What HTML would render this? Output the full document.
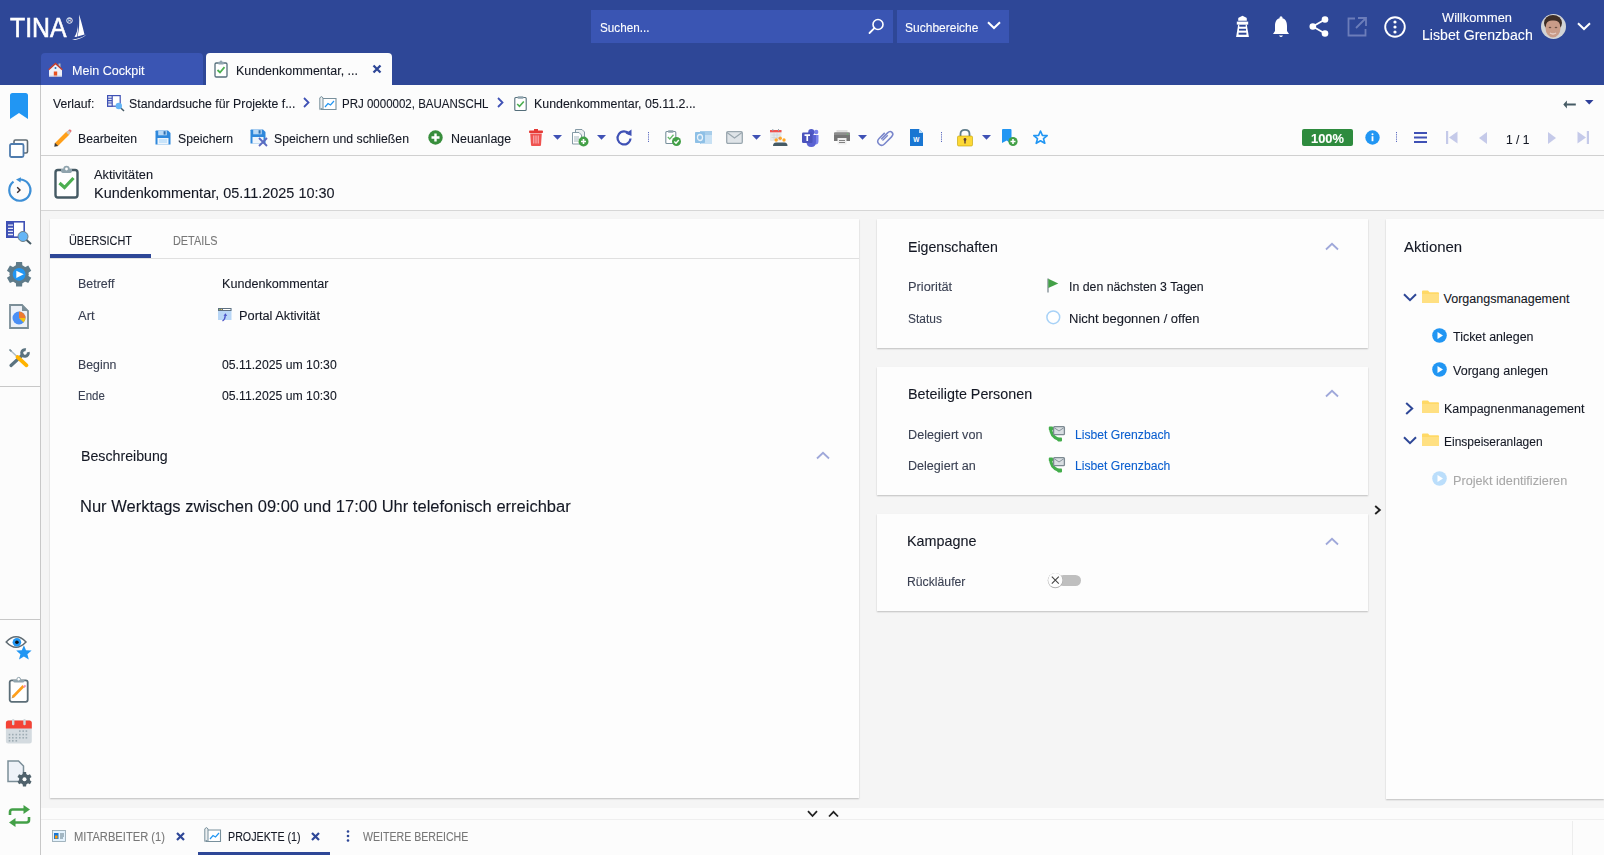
<!DOCTYPE html>
<html><head><meta charset="utf-8">
<style>
*{margin:0;padding:0;box-sizing:border-box}
html,body{width:1604px;height:855px;overflow:hidden;background:#fcfcfc;font-family:"Liberation Sans",sans-serif}
.t{position:absolute;white-space:nowrap;line-height:1;-webkit-text-stroke:0.1px currentColor}
.r{position:absolute}
svg{position:absolute;overflow:visible}
</style></head><body>

<div class="r" style="left:0px;top:0px;width:1604px;height:85px;background:#2e4797;"></div>
<div class="t" style="left:9.50px;top:13.62px;font-size:27.5px;letter-spacing:0.000px;color:#fff;transform:scaleX(0.9018);transform-origin:0 0;-webkit-text-stroke:0.6px #fff;">TINA</div>
<svg style="left:66px;top:17px" width="7" height="7" viewBox="0 0 7 7"><circle cx="3.5" cy="3.5" r="2.8" fill="none" stroke="#fff" stroke-width="0.9"/><text x="3.5" y="5.2" font-size="4.5" fill="#fff" text-anchor="middle" font-family="Liberation Sans">R</text></svg>
<svg style="left:72px;top:14px" width="15" height="26" viewBox="0 0 15 26"><path d="M7 0.5 Q9 6 12.5 20.5 L5.5 22.5 Q8 12 7 0.5 Z" fill="#fff"/><path d="M6 10 Q6 17 2.5 23 L5 22.8 Q6.5 16 6 10 Z" fill="#fff"/><path d="M0 25.5 Q8 25 14.5 20.5 Q11 24 3 26 Z" fill="#fff"/></svg>
<div class="r" style="left:591px;top:10px;width:302px;height:33px;background:#3a55b3;"></div>
<div class="t" style="left:600.40px;top:21.92px;font-size:12.5px;letter-spacing:0.000px;color:#fff;transform:scaleX(0.9356);transform-origin:0 0;">Suchen...</div>
<svg style="left:868px;top:18px" width="17" height="17" viewBox="0 0 17 17"><circle cx="10" cy="6.5" r="5" fill="none" stroke="#fff" stroke-width="1.6"/><path d="M6.4 10.2 L1.5 15" stroke="#fff" stroke-width="1.8" stroke-linecap="round"/></svg>
<div class="r" style="left:897px;top:10px;width:112px;height:33px;background:#3a55b3;"></div>
<div class="t" style="left:905.00px;top:21.92px;font-size:12.5px;letter-spacing:0.000px;color:#fff;transform:scaleX(0.9614);transform-origin:0 0;">Suchbereiche</div>
<svg style="left:987px;top:21px" width="14" height="9" viewBox="0 0 14 9"><path d="M1 1.2 L7 7 L13 1.2" fill="none" stroke="#fff" stroke-width="2"/></svg>
<svg style="left:1235px;top:15px" width="15" height="23" viewBox="0 0 15 23"><path d="M3.2 5.8 V3.6 Q3.2 2.6 4.5 2.2 L7.5 0.8 L10.5 2.2 Q11.8 2.6 11.8 3.6 V5.8 Z" fill="#fff"/><path d="M1.8 6.6 H13.2 V9.6 H1.8 Z" fill="#fff"/><path d="M3.2 9.4 H11.8 L13.9 22 H1.1 Z" fill="#fff"/><g fill="#2e4797"><rect x="4.3" y="9.9" width="6.4" height="1.8"/><rect x="4" y="13.8" width="7" height="1.8"/><rect x="3.6" y="17.7" width="7.8" height="2"/></g></svg>
<svg style="left:1272px;top:16px" width="18" height="23" viewBox="0 0 18 23"><path d="M9 2 C4.5 2 3 6 3 10 L3 15 L1 18 L17 18 L15 15 L15 10 C15 6 13.5 2 9 2 Z" fill="#fff"/><circle cx="9" cy="1.8" r="1.5" fill="#fff"/><path d="M7 19.5 Q9 22.5 11 19.5 Z" fill="#fff"/></svg>
<svg style="left:1309px;top:16px" width="20" height="21" viewBox="0 0 20 21"><circle cx="16" cy="3.5" r="3.3" fill="#fff"/><circle cx="3.8" cy="10.5" r="3.3" fill="#fff"/><circle cx="16" cy="17.5" r="3.3" fill="#fff"/><path d="M16 3.5 L3.8 10.5 L16 17.5" fill="none" stroke="#fff" stroke-width="1.8"/></svg>
<svg style="left:1347px;top:17px" width="20" height="20" viewBox="0 0 20 20"><path d="M8 1.5 L1.5 1.5 L1.5 18.5 L18.5 18.5 L18.5 12" fill="none" stroke="#6c7dba" stroke-width="1.8"/><path d="M11 1 L19 1 L19 9 M19 1 L9 11" fill="none" stroke="#6c7dba" stroke-width="1.8"/></svg>
<svg style="left:1384px;top:16px" width="22" height="22" viewBox="0 0 22 22"><circle cx="11" cy="11" r="9.8" fill="none" stroke="#fff" stroke-width="1.9"/><circle cx="11" cy="6" r="1.6" fill="#fff"/><circle cx="11" cy="11" r="1.6" fill="#fff"/><circle cx="11" cy="16" r="1.6" fill="#fff"/></svg>
<div class="t" style="left:1442.00px;top:11.62px;font-size:12.5px;letter-spacing:0.000px;color:#fff;transform:scaleX(1.0287);transform-origin:0 0;">Willkommen</div>
<div class="t" style="left:1421.70px;top:28.40px;font-size:14.3px;letter-spacing:0.000px;color:#fff;transform:scaleX(0.9884);transform-origin:0 0;">Lisbet Grenzbach</div>
<svg style="left:1541px;top:14px" width="25" height="25" viewBox="0 0 25 25"><defs><clipPath id="av"><circle cx="12.5" cy="12.5" r="12.5"/></clipPath></defs><g clip-path="url(#av)"><rect width="25" height="25" fill="#d2d4d6"/><ellipse cx="12" cy="9" rx="9" ry="8" fill="#3e2e26"/><ellipse cx="12" cy="14" rx="7.5" ry="9.5" fill="#c99c88"/><path d="M4.5 10 Q6 3 12 3.5 Q18 3 19.5 10 Q17 6 12 6.5 Q7 6 4.5 10 Z" fill="#3e2e26"/><ellipse cx="9" cy="13.5" rx="1.3" ry="0.8" fill="#6b5044"/><ellipse cx="15" cy="13.5" rx="1.3" ry="0.8" fill="#6b5044"/><path d="M9 19 Q12 21 15 19" stroke="#e8d0c8" stroke-width="1.3" fill="none"/></g></svg>
<svg style="left:1577px;top:22px" width="14" height="9" viewBox="0 0 14 9"><path d="M1 1.2 L7 7 L13 1.2" fill="none" stroke="#fff" stroke-width="2"/></svg>
<div class="r" style="left:41px;top:53px;width:162px;height:32px;background:#3a55b3;border-radius:4px 4px 0 0"></div>
<svg style="left:48px;top:62px" width="15" height="15" viewBox="0 0 15 15"><rect x="10.5" y="1.5" width="2" height="4" fill="#b0bec5"/><path d="M7.5 1 L1 7.2 V14.5 H14 V7.2 Z" fill="#eef0f7"/><path d="M7.5 0.6 L0.2 7.3 L1.1 8.2 L7.5 2.4 L13.9 8.2 L14.8 7.3 Z" fill="#c0392b"/><circle cx="7.5" cy="5.9" r="1" fill="#1e6fb8"/><rect x="5.8" y="9.5" width="3.4" height="5" fill="#e8501f"/><rect x="1" y="13.5" width="13" height="1" fill="#cfd3e6"/></svg>
<div class="t" style="left:71.60px;top:64.82px;font-size:12.5px;letter-spacing:0.000px;color:#fff;transform:scaleX(1.0035);transform-origin:0 0;">Mein Cockpit</div>
<div class="r" style="left:206px;top:53px;width:186px;height:32px;background:#fcfcfc;border-radius:4px 4px 0 0"></div>
<svg style="left:214px;top:60px" width="14" height="18" viewBox="0 0 14 18"><rect x="1" y="3" width="12" height="14" rx="1.3" fill="#fff" stroke="#546e7a" stroke-width="1.3"/><rect x="4" y="1.8" width="6" height="2.6" rx="0.8" fill="#90a4ae"/><circle cx="7" cy="1.6" r="1.2" fill="#90a4ae"/><path d="M3.5 10 L6 12.5 L10.5 7.2" fill="none" stroke="#4caf50" stroke-width="1.8"/></svg>
<div class="t" style="left:236.40px;top:64.82px;font-size:12.5px;letter-spacing:0.000px;color:#141824;transform:scaleX(0.9975);transform-origin:0 0;">Kundenkommentar, ...</div>
<svg style="left:372px;top:64px" width="10" height="10" viewBox="0 0 10 10"><path d="M1.5 1.5 L8.5 8.5 M8.5 1.5 L1.5 8.5" stroke="#2e4797" stroke-width="2.3"/></svg>
<div class="r" style="left:40px;top:85px;width:1px;height:770px;background:#c8c8c8;"></div>
<div class="r" style="left:0px;top:386px;width:40px;height:1px;background:#c8c8c8;"></div>
<div class="r" style="left:0px;top:619px;width:40px;height:1px;background:#c8c8c8;"></div>
<svg style="left:10px;top:93px" width="18" height="26" viewBox="0 0 18 26"><path d="M2.5 0 L15.5 0 Q18 0 18 2.5 L18 26 L9 20 L0 26 L0 2.5 Q0 0 2.5 0 Z" fill="#2196f3"/></svg>
<svg style="left:9px;top:139px" width="20" height="19" viewBox="0 0 20 19"><rect x="5" y="1" width="13.5" height="13" rx="1.5" fill="none" stroke="#5f6b73" stroke-width="1.6"/><rect x="1" y="5" width="13.5" height="13" rx="1.5" fill="#fff" stroke="#4f7cae" stroke-width="1.8"/></svg>
<svg style="left:7px;top:178px" width="24" height="24" viewBox="0 0 24 24"><path d="M6.5 3.6 A10.6 10.6 0 1 0 12.5 1.5" fill="none" stroke="#3d8fd6" stroke-width="2.2"/><path d="M9 1.6 L14 -0.8 L13.6 4.6 Z" fill="#3d8fd6"/><path d="M10.2 9.2 L13 12 L10.2 14.8" fill="none" stroke="#3a2a2a" stroke-width="1.4"/></svg>
<svg style="left:6px;top:221px" width="26" height="24" viewBox="0 0 26 24"><rect x="0.8" y="0.8" width="17.4" height="15.4" fill="#fff" stroke="#3f51b5" stroke-width="1.6"/><rect x="0.8" y="0.8" width="7.2" height="15.4" fill="#3f51b5"/><path d="M2 4.2 H7 M2 7.3 H7 M2 10.4 H7 M2 13.5 H7" stroke="#e8eaf6" stroke-width="1.3"/><path d="M20 18.5 L25 23" stroke="#455a64" stroke-width="2"/><circle cx="17" cy="15.5" r="5" fill="#64b5f6" stroke="#6d7f88" stroke-width="1"/></svg>
<svg style="left:6px;top:261px" width="26" height="26" viewBox="0 0 26 26"><g transform="translate(13.1 13.3)" fill="#5f7b89"><circle r="9.6"/><path d="M-3 -12.3 H3 L3.3 -8 H-3.3 Z"/><path d="M-3 -12.3 H3 L3.3 -8 H-3.3 Z" transform="rotate(60)"/><path d="M-3 -12.3 H3 L3.3 -8 H-3.3 Z" transform="rotate(120)"/><path d="M-3 -12.3 H3 L3.3 -8 H-3.3 Z" transform="rotate(180)"/><path d="M-3 -12.3 H3 L3.3 -8 H-3.3 Z" transform="rotate(240)"/><path d="M-3 -12.3 H3 L3.3 -8 H-3.3 Z" transform="rotate(300)"/><circle r="6.4" fill="#2196f3"/><path d="M-2.8 -3.6 L4.6 0 L-2.8 3.6 Z" fill="#fff"/></g></svg>
<svg style="left:9px;top:304px" width="20" height="25" viewBox="0 0 20 25"><path d="M1 1 H13 L19 7 V24 H1 Z" fill="#edf1f7" stroke="#7b8e98" stroke-width="1.8"/><path d="M13 0.2 L19.8 7 H13 Z" fill="#7b8e98"/><circle cx="10" cy="14" r="6.5" fill="#4a8ff5"/><path d="M10 14 V7.5 A6.5 6.5 0 0 1 16.5 14 Z" fill="#ee7b30"/><path d="M10 14 H16.5 A6.5 6.5 0 0 1 14.6 18.6 Z" fill="#f4c20d"/></svg>
<svg style="left:8px;top:348px" width="22" height="20" viewBox="0 0 22 20"><path d="M2 2 L9.5 9" stroke="#b0bec5" stroke-width="1.6" stroke-linecap="round"/><path d="M1.5 1.5 L3.5 3.3" stroke="#78909c" stroke-width="1.6"/><path d="M3 17.5 L14.5 7" stroke="#5b7380" stroke-width="3.2" stroke-linecap="round"/><path d="M20.2 4.2 A3.3 3.3 0 1 1 17.8 1.8" fill="none" stroke="#5b7380" stroke-width="3"/><path d="M9.5 9 L18.5 17.3" stroke="#ffb300" stroke-width="3.8" stroke-linecap="round"/></svg>
<svg style="left:5px;top:635px" width="28" height="25" viewBox="0 0 28 25"><path d="M1.2 7 Q11 -3.5 21 7 Q11 17.5 1.2 7 Z" fill="#fff" stroke="#5f6b73" stroke-width="1.5"/><circle cx="11.9" cy="7.2" r="4.3" fill="#2196f3"/><circle cx="11.9" cy="7.2" r="1.8" fill="#111"/><path d="M18.9 10.3 L21 15.2 L26.6 15.6 L22.4 19.2 L23.8 24.5 L18.9 21.6 L14 24.5 L15.4 19.2 L11.2 15.6 L16.8 15.2 Z" fill="#2196f3"/></svg>
<svg style="left:8px;top:677px" width="21" height="26" viewBox="0 0 21 26"><rect x="1.7" y="3.3" width="18" height="21.5" rx="2" fill="#fff" stroke="#5b6d77" stroke-width="1.8"/><path d="M5 3 H16.5 Q16.5 5.5 15 5.5 H6.5 Q5 5.5 5 3 Z" fill="#90a4ae"/><circle cx="10.7" cy="2.2" r="1.8" fill="#fff" stroke="#90a4ae" stroke-width="1"/><path d="M4.8 20 L15.5 9" stroke="#ff9f1a" stroke-width="2.6"/><path d="M15 9.5 L16.8 7.7 L18.2 9 L16.4 10.9 Z" fill="#f48fb1"/><path d="M3.6 21.5 L4.2 19 L5.8 20.5 Z" fill="#c99a5b"/></svg>
<svg style="left:5px;top:719px" width="27" height="25" viewBox="0 0 27 25"><rect x="0.9" y="1.4" width="25.9" height="23.2" rx="2.5" fill="#d4dbe0"/><path d="M0.9 4 Q0.9 1.4 3.4 1.4 H24.3 Q26.8 1.4 26.8 4 V9.6 H0.9 Z" fill="#f44336"/><rect x="7" y="0" width="2.4" height="6.3" rx="1.1" fill="#cfd8dc"/><rect x="18.3" y="0" width="2.4" height="6.3" rx="1.1" fill="#cfd8dc"/><g fill="#9eacb4"><rect x="14" y="11.3" width="1.6" height="1.6"/><rect x="17.4" y="11.3" width="1.6" height="1.6"/><rect x="20.6" y="11.3" width="1.6" height="1.6"/><rect x="3.7" y="14.8" width="1.6" height="1.6"/><rect x="7" y="14.8" width="1.6" height="1.6"/><rect x="10.5" y="14.8" width="1.6" height="1.6"/><rect x="14" y="14.8" width="1.6" height="1.6"/><rect x="17.4" y="14.8" width="1.6" height="1.6"/><rect x="20.6" y="14.8" width="1.6" height="1.6"/><rect x="3.7" y="18" width="1.6" height="1.6"/><rect x="7" y="18" width="1.6" height="1.6"/><rect x="10.5" y="18" width="1.6" height="1.6"/><rect x="14" y="18" width="1.6" height="1.6"/><rect x="17.4" y="18" width="1.6" height="1.6"/><rect x="20.6" y="18" width="1.6" height="1.6"/><rect x="3.7" y="21" width="1.6" height="1.6"/><rect x="7" y="21" width="1.6" height="1.6"/><rect x="10.5" y="21" width="1.6" height="1.6"/></g></svg>
<svg style="left:7px;top:760px" width="25" height="27" viewBox="0 0 25 27"><path d="M1 1 H11.5 L16.5 6 V21.5 H1 Z" fill="#eef2f8" stroke="#7b8e98" stroke-width="1.5"/><g transform="translate(17.5 19.2)" fill="#50626c"><circle r="5.4"/><path d="M-1.6 -7.2 H1.6 L1.9 -4 H-1.9 Z"/><path d="M-1.6 -7.2 H1.6 L1.9 -4 H-1.9 Z" transform="rotate(60)"/><path d="M-1.6 -7.2 H1.6 L1.9 -4 H-1.9 Z" transform="rotate(120)"/><path d="M-1.6 -7.2 H1.6 L1.9 -4 H-1.9 Z" transform="rotate(180)"/><path d="M-1.6 -7.2 H1.6 L1.9 -4 H-1.9 Z" transform="rotate(240)"/><path d="M-1.6 -7.2 H1.6 L1.9 -4 H-1.9 Z" transform="rotate(300)"/><circle r="2" fill="#fff"/></g></svg>
<svg style="left:8px;top:805px" width="23" height="22" viewBox="0 0 23 22"><path d="M2 10 V7 Q2 4.5 4.5 4.5 H17" fill="none" stroke="#43a047" stroke-width="2.6"/><path d="M15.5 0 L22 4.5 L15.5 9 Z" fill="#43a047"/><path d="M21 12 V15 Q21 17.5 18.5 17.5 H6" fill="none" stroke="#43a047" stroke-width="2.6"/><path d="M7.5 13 L1 17.5 L7.5 22 Z" fill="#43a047"/></svg>
<div class="t" style="left:52.70px;top:97.92px;font-size:12.5px;letter-spacing:0.000px;color:#141824;transform:scaleX(0.9764);transform-origin:0 0;">Verlauf:</div>
<svg style="left:107px;top:95px" width="18" height="17" viewBox="0 0 18 17"><rect x="0.6" y="0.6" width="12.6" height="10.6" fill="#fff" stroke="#3f51b5" stroke-width="1.2"/><rect x="0.6" y="0.6" width="4.6" height="10.6" fill="#e8eaf6" stroke="#3f51b5" stroke-width="1.2"/><path d="M1 3.2 H5 M1 5.6 H5 M1 8 H5" stroke="#3f51b5" stroke-width="1.1"/><path d="M13 12.2 L17 16" stroke="#455a64" stroke-width="1.5"/><circle cx="11.8" cy="11" r="3.2" fill="#64b5f6"/></svg>
<div class="t" style="left:129.00px;top:97.92px;font-size:12.5px;letter-spacing:0.000px;color:#141824;transform:scaleX(0.9855);transform-origin:0 0;">Standardsuche für Projekte f...</div>
<svg style="left:303px;top:97px" width="7" height="11" viewBox="0 0 7 11"><path d="M1 1 L5.5 5.5 L1 10" fill="none" stroke="#3f51b5" stroke-width="1.8"/></svg>
<svg style="left:319px;top:96px" width="18" height="15" viewBox="0 0 18 15"><path d="M2.5 0.8 V13.5 H17 V2.5 H4" fill="#fff" stroke="#78909c" stroke-width="1.1"/><path d="M0.8 1.8 Q2.5 -0.5 4 1.8 V13.5 Q2.5 11.5 0.8 13.5 Z" fill="#eceff1" stroke="#78909c" stroke-width="1"/><path d="M6 11 L9 7.5 L11.5 9 L15 5" fill="none" stroke="#2196f3" stroke-width="1.2"/></svg>
<div class="t" style="left:341.80px;top:97.92px;font-size:12.5px;letter-spacing:0.000px;color:#141824;transform:scaleX(0.9208);transform-origin:0 0;">PRJ 0000002, BAUANSCHL</div>
<svg style="left:497px;top:97px" width="7" height="11" viewBox="0 0 7 11"><path d="M1 1 L5.5 5.5 L1 10" fill="none" stroke="#3f51b5" stroke-width="1.8"/></svg>
<svg style="left:514px;top:95px" width="13" height="16" viewBox="0 0 13 16"><rect x="0.8" y="2.5" width="11.4" height="13" rx="1" fill="#fff" stroke="#546e7a" stroke-width="1.1"/><rect x="3.5" y="1.3" width="6" height="2.5" rx="0.7" fill="#90a4ae"/><path d="M3.2 9 L5.5 11.3 L9.8 6.5" fill="none" stroke="#4caf50" stroke-width="1.6"/></svg>
<div class="t" style="left:534.20px;top:97.92px;font-size:12.5px;letter-spacing:0.000px;color:#141824;transform:scaleX(0.9923);transform-origin:0 0;">Kundenkommentar, 05.11.2...</div>
<svg style="left:1563px;top:100px" width="13" height="9" viewBox="0 0 13 9"><path d="M0.3 4.5 L3.9 0.6 V8.4 Z" fill="#455a64"/><rect x="3.5" y="3.5" width="9.3" height="2" fill="#455a64"/></svg>
<svg style="left:1585px;top:100px" width="9" height="6" viewBox="0 0 9 6"><path d="M0 0 H8.5 L4.25 4.4 Z" fill="#2e3f99"/></svg>
<div class="r" style="left:41px;top:155px;width:1563px;height:1px;background:#d0d0d0;"></div>
<svg style="left:54px;top:129px" width="18" height="18" viewBox="0 0 18 18"><path d="M2.2 15.8 L14 4" stroke="#ff9f1a" stroke-width="4.2"/><path d="M13 2.8 L15.2 0.6 Q16.3 0.2 17.2 1.1 Q17.8 2 17.2 2.8 L15.2 5 Z" fill="#e57373"/><path d="M12.2 3.4 L14.6 1.2 L16.8 3.4 L14.5 5.8 Z" fill="#c7c7c7"/><path d="M0.3 17.7 L0.9 13.8 L4.2 17.1 Z" fill="#3a3a3a"/></svg>
<div class="t" style="left:78.30px;top:133.02px;font-size:12.5px;letter-spacing:0.000px;color:#141824;transform:scaleX(0.9760);transform-origin:0 0;">Bearbeiten</div>
<svg style="left:155px;top:130px" width="16" height="15" viewBox="0 0 16 15"><path d="M0.5 1.2 Q0.5 0.5 1.2 0.5 H13 L15.5 3 V14.5 H0.5 Z" fill="#2f88dc"/><rect x="3.2" y="0.5" width="8.6" height="4.8" fill="#b9d8f5"/><rect x="8.6" y="1.2" width="2" height="3.4" fill="#2f6fb0"/><rect x="2.5" y="8" width="11" height="6.5" fill="#eef5fc"/><path d="M4 10 H12 M4 12 H12" stroke="#90caf9" stroke-width="0.8"/></svg>
<div class="t" style="left:178.30px;top:133.02px;font-size:12.5px;letter-spacing:0.000px;color:#141824;transform:scaleX(0.9805);transform-origin:0 0;">Speichern</div>
<svg style="left:250px;top:129px" width="18" height="18" viewBox="0 0 18 18"><path d="M0.5 1.2 Q0.5 0.5 1.2 0.5 H13 L15.5 3 V14.5 H0.5 Z" fill="#2f88dc"/><rect x="3.2" y="0.5" width="8.6" height="4.8" fill="#b9d8f5"/><rect x="8.6" y="1.2" width="2" height="3.4" fill="#2f6fb0"/><rect x="2.5" y="8" width="11" height="6.5" fill="#eef5fc"/><path d="M9 9 L17 17 M17 9 L9 17" stroke="#5c6bc0" stroke-width="1.8"/></svg>
<div class="t" style="left:274.30px;top:133.02px;font-size:12.5px;letter-spacing:0.000px;color:#141824;transform:scaleX(0.9811);transform-origin:0 0;">Speichern und schließen</div>
<svg style="left:428px;top:130px" width="15" height="15" viewBox="0 0 15 15"><circle cx="7.5" cy="7.5" r="7.2" fill="#388e3c"/><path d="M7.5 3.5 V11.5 M3.5 7.5 H11.5" stroke="#fff" stroke-width="2.4"/></svg>
<div class="t" style="left:450.90px;top:133.02px;font-size:12.5px;letter-spacing:0.000px;color:#141824;transform:scaleX(0.9942);transform-origin:0 0;">Neuanlage</div>
<svg style="left:529px;top:129px" width="14" height="17" viewBox="0 0 14 17"><rect x="0" y="1.5" width="14" height="2.5" rx="0.8" fill="#e53935"/><rect x="5" y="0" width="4" height="2" fill="#e53935"/><path d="M1.2 4.5 H12.8 L12 16 Q12 17 11 17 H3 Q2 17 2 16 Z" fill="#ef5350"/><path d="M4.8 6.5 V14.5 M7 6.5 V14.5 M9.2 6.5 V14.5" stroke="#ffcdd2" stroke-width="0.9"/></svg>
<svg style="left:553px;top:134.5px" width="9" height="5" viewBox="0 0 9 5"><path d="M0 0 H9 L4.5 4.8 Z" fill="#3f51b5"/></svg>
<svg style="left:572px;top:129px" width="17" height="18" viewBox="0 0 17 18"><path d="M3.5 0.5 H10 L12.5 3 V12 H3.5 Z" fill="#eceff1" stroke="#78909c" stroke-width="0.9"/><path d="M0.5 3.5 H7 L9.5 6 V15 H0.5 Z" fill="#fff" stroke="#78909c" stroke-width="0.9"/><path d="M2 8 H7 M2 10 H7 M2 12 H6" stroke="#90a4ae" stroke-width="0.8"/><circle cx="11.5" cy="12.5" r="5" fill="#43a047"/><path d="M11.5 10 V15 M9 12.5 H14" stroke="#fff" stroke-width="1.6"/></svg>
<svg style="left:597px;top:134.5px" width="9" height="5" viewBox="0 0 9 5"><path d="M0 0 H9 L4.5 4.8 Z" fill="#3f51b5"/></svg>
<svg style="left:616px;top:129px" width="16" height="17" viewBox="0 0 16 17"><path d="M13.2 5 A6.5 6.5 0 1 0 14.5 9.5" fill="none" stroke="#3f51b5" stroke-width="2.2"/><path d="M9.5 4.5 L15.5 0.5 L15.5 7 Z" fill="#3f51b5"/></svg>
<svg style="left:648px;top:132px" width="1" height="11" viewBox="0 0 1 11"><path d="M0.5 0 V11" stroke="#5c6bc0" stroke-width="1" stroke-dasharray="1.2 1"/></svg>
<svg style="left:665px;top:129px" width="16" height="17" viewBox="0 0 16 17"><rect x="0.8" y="2.5" width="10" height="12" rx="1" fill="#fff" stroke="#78909c" stroke-width="1.1"/><rect x="3" y="1.3" width="5.5" height="2.5" rx="0.7" fill="#90a4ae"/><path d="M2.8 8 L4.8 10 L8.5 5.8" fill="none" stroke="#66bb6a" stroke-width="1.3"/><circle cx="11.5" cy="12.5" r="4.5" fill="#43a047"/><path d="M9.3 12.5 L11 14.2 L13.8 11" fill="none" stroke="#fff" stroke-width="1.4"/></svg>
<svg style="left:695px;top:129px" width="17" height="17" viewBox="0 0 17 17"><rect x="5" y="2" width="12" height="13" fill="#a7cdea"/><rect x="6" y="6" width="11" height="9" fill="#c8e1f4"/><rect x="0" y="3" width="10" height="11" rx="0.8" fill="#8ec0e6"/><ellipse cx="5" cy="8.5" rx="2.5" ry="3" fill="none" stroke="#e8f2fa" stroke-width="1.3"/></svg>
<svg style="left:726px;top:131px" width="17" height="13" viewBox="0 0 17 13"><rect x="0.7" y="0.7" width="15.6" height="11.6" rx="1.2" fill="#dfe4e8" stroke="#9aa7af" stroke-width="1.3"/><path d="M1 1.5 L8.5 7 L16 1.5" fill="none" stroke="#9aa7af" stroke-width="1.2"/></svg>
<svg style="left:752px;top:134.5px" width="9" height="5" viewBox="0 0 9 5"><path d="M0 0 H9 L4.5 4.8 Z" fill="#3f51b5"/></svg>
<svg style="left:770px;top:129px" width="18" height="18" viewBox="0 0 18 18"><rect x="0" y="1" width="11.5" height="11" rx="0.8" fill="#e6eaed"/><rect x="0" y="1" width="11.5" height="2.3" fill="#ef5350"/><rect x="2.3" y="0" width="1" height="2" fill="#90a4ae"/><rect x="8" y="0" width="1" height="2" fill="#90a4ae"/><path d="M1.5 6 H10 M1.5 8.5 H10 M4 4 V11 M7 4 V11" stroke="#cfd6db" stroke-width="0.8"/><circle cx="6.2" cy="11" r="1.7" fill="#ffa726"/><circle cx="10.2" cy="9.3" r="1.7" fill="#ffa726"/><circle cx="14" cy="11" r="1.7" fill="#ffa726"/><path d="M9 10 L10 9" stroke="#e57373" stroke-width="1"/><path d="M3 17 Q3 13.5 6 13.5 H14.5 Q17.5 13.5 17.5 17 Z" fill="#455a64"/></svg>
<svg style="left:802px;top:129px" width="17" height="18" viewBox="0 0 17 18"><circle cx="14.2" cy="3" r="2.2" fill="#7b83eb"/><path d="M11 6 H16.5 V12 Q16.5 15.5 13.5 15.5 Q11 15.5 11 12 Z" fill="#7b83eb"/><circle cx="9.3" cy="3.2" r="3.1" fill="#5059c9"/><path d="M4.5 6 H14 V13 Q14 18 9.3 18 Q4.5 18 4.5 13 Z" fill="#5b63d3"/><rect x="0" y="3.5" width="10.5" height="10.5" rx="1.2" fill="#4b53bc"/><path d="M2.5 6.2 H8 M5.25 6.2 V12" stroke="#fff" stroke-width="1.7"/></svg>
<svg style="left:834px;top:130px" width="16" height="15" viewBox="0 0 16 15"><rect x="2.5" y="0" width="11" height="2.5" fill="#e0e0e0"/><path d="M1.5 2.5 H14.5 Q16 2.5 16 4 V11 H0 V4 Q0 2.5 1.5 2.5 Z" fill="#757575"/><rect x="0" y="2.5" width="16" height="2.5" fill="#8d8d8d"/><circle cx="13.5" cy="4.2" r="0.7" fill="#66bb6a"/><rect x="3.5" y="8" width="9" height="6.5" fill="#eeeeee"/><path d="M5 10.5 H11 M5 12.5 H11" stroke="#757575" stroke-width="0.9"/></svg>
<svg style="left:858px;top:134.5px" width="9" height="5" viewBox="0 0 9 5"><path d="M0 0 H9 L4.5 4.8 Z" fill="#3f51b5"/></svg>
<svg style="left:879px;top:130px" width="14" height="14" viewBox="0 0 14 14"><g transform="rotate(45 7 7)"><path d="M5.2 12 V3 Q5.2 -0.5 8 -0.5 Q10.8 -0.5 10.8 3 V13 Q10.8 17 7 17 Q3.2 17 3.2 13 V5" fill="none" stroke="#7986cb" stroke-width="1.5"/><path d="M7 4.5 V12" stroke="#7986cb" stroke-width="1.4"/></g></svg>
<svg style="left:910px;top:129px" width="13" height="17" viewBox="0 0 13 17"><path d="M0 0 H9 L13 4 V17 H0 Z" fill="#1976d2"/><path d="M9 0 V4 H13 Z" fill="#bbdefb"/><text x="6.3" y="12.8" font-size="6.5" font-weight="bold" fill="#fff" text-anchor="middle" font-family="Liberation Sans">W</text></svg>
<svg style="left:941px;top:132px" width="1" height="11" viewBox="0 0 1 11"><path d="M0.5 0 V11" stroke="#5c6bc0" stroke-width="1" stroke-dasharray="1.2 1"/></svg>
<svg style="left:957px;top:129px" width="16" height="17" viewBox="0 0 16 17"><path d="M3.5 8 V5 Q3.5 0.8 8 0.8 Q12.5 0.8 12.5 5 V8" fill="none" stroke="#607d8b" stroke-width="1.8"/><rect x="0.5" y="7" width="15" height="10" rx="1.2" fill="#fdd835" stroke="#c0a000" stroke-width="0.6"/><circle cx="8" cy="10.5" r="1.4" fill="#5d4037"/><rect x="7.3" y="10.5" width="1.4" height="4" fill="#5d4037"/></svg>
<svg style="left:982px;top:134.5px" width="9" height="5" viewBox="0 0 9 5"><path d="M0 0 H9 L4.5 4.8 Z" fill="#3f51b5"/></svg>
<svg style="left:1002px;top:129px" width="16" height="18" viewBox="0 0 16 18"><path d="M0 1 Q0 0 1 0 H8.5 Q9.5 0 9.5 1 V15 L4.75 11.5 L0 14 Z" fill="#2196f3"/><circle cx="11" cy="12.5" r="4.6" fill="#43a047"/><path d="M11 10 V15 M8.5 12.5 H13.5" stroke="#fff" stroke-width="1.6"/></svg>
<svg style="left:1033px;top:130px" width="15" height="14" viewBox="0 0 15 14"><path d="M7.5 1 L9.4 5.4 L14.2 5.6 L10.5 8.7 L11.8 13.3 L7.5 10.7 L3.2 13.3 L4.5 8.7 L0.8 5.6 L5.6 5.4 Z" fill="none" stroke="#2196f3" stroke-width="1.6" stroke-linejoin="round"/></svg>
<div class="r" style="left:1302px;top:129px;width:51px;height:17px;background:#2e8b3e;border-radius:2px"></div>
<div class="t" style="left:1311.00px;top:132.10px;font-size:13px;letter-spacing:0.000px;color:#fff;font-weight:bold;transform:scaleX(0.9925);transform-origin:0 0;">100%</div>
<svg style="left:1365px;top:130px" width="15" height="15" viewBox="0 0 15 15"><circle cx="7.5" cy="7.5" r="7.2" fill="#2196f3"/><rect x="6.6" y="6.2" width="1.8" height="5" fill="#fff"/><circle cx="7.5" cy="4.3" r="1" fill="#fff"/></svg>
<svg style="left:1396px;top:132px" width="1" height="11" viewBox="0 0 1 11"><path d="M0.5 0 V11" stroke="#5c6bc0" stroke-width="1" stroke-dasharray="1.2 1"/></svg>
<svg style="left:1414px;top:132px" width="13" height="11" viewBox="0 0 13 11"><path d="M0 1 H13 M0 5.5 H13 M0 10 H13" stroke="#3f51b5" stroke-width="1.8"/></svg>
<svg style="left:1446px;top:131px" width="12" height="13" viewBox="0 0 12 13"><rect x="0" y="0" width="2.2" height="13" fill="#c5cae9"/><path d="M11.5 0.5 V12.5 L3 6.5 Z" fill="#c5cae9"/></svg>
<svg style="left:1479px;top:132px" width="8" height="12" viewBox="0 0 8 12"><path d="M8 0 V12 L0 6 Z" fill="#c5cae9"/></svg>
<div class="t" style="left:1506.00px;top:133.00px;font-size:13px;letter-spacing:0.000px;color:#141824;transform:scaleX(0.9289);transform-origin:0 0;">1 / 1</div>
<svg style="left:1548px;top:132px" width="8" height="12" viewBox="0 0 8 12"><path d="M0 0 V12 L8 6 Z" fill="#c5cae9"/></svg>
<svg style="left:1577px;top:131px" width="12" height="13" viewBox="0 0 12 13"><path d="M0.5 0.5 V12.5 L9 6.5 Z" fill="#c5cae9"/><rect x="9.8" y="0" width="2.2" height="13" fill="#c5cae9"/></svg>
<svg style="left:54px;top:165px" width="25" height="34" viewBox="0 0 25 34"><rect x="1.5" y="5" width="22" height="27.5" rx="2.5" fill="#fff" stroke="#455a64" stroke-width="2.4"/><path d="M7 4 H18 Q18.5 8 16 8 H9 Q6.5 8 7 4 Z" fill="#90a4ae"/><circle cx="12.5" cy="4" r="3.2" fill="#90a4ae"/><circle cx="12.5" cy="4" r="1.4" fill="#fff"/><path d="M5.5 18 L10.5 22.5 L19.5 13" fill="none" stroke="#4caf50" stroke-width="3.2"/></svg>
<div class="t" style="left:94.30px;top:168.82px;font-size:12.5px;letter-spacing:0.000px;color:#141824;transform:scaleX(1.0234);transform-origin:0 0;">Aktivitäten</div>
<div class="t" style="left:94.30px;top:186.45px;font-size:14px;letter-spacing:0.000px;color:#141824;transform:scaleX(1.0311);transform-origin:0 0;">Kundenkommentar, 05.11.2025 10:30</div>
<div class="r" style="left:41px;top:210px;width:1563px;height:1px;background:#d6d6d6;"></div>
<div class="r" style="left:41px;top:211px;width:1563px;height:644px;background:#f5f5f5;"></div>
<div class="r" style="left:50px;top:219px;width:809px;height:579px;background:#fdfdfd;box-shadow:0 1px 1.5px rgba(0,0,0,0.22)"></div>
<div class="t" style="left:68.60px;top:235.32px;font-size:12.5px;letter-spacing:0.000px;color:#141824;transform:scaleX(0.8720);transform-origin:0 0;">ÜBERSICHT</div>
<div class="t" style="left:172.80px;top:235.32px;font-size:12.5px;letter-spacing:0.000px;color:#777;transform:scaleX(0.8700);transform-origin:0 0;">DETAILS</div>
<div class="r" style="left:50px;top:258px;width:809px;height:1px;background:#e0e0e0;"></div>
<div class="r" style="left:50px;top:254px;width:101px;height:4px;background:#2e4797;"></div>
<div class="t" style="left:78.20px;top:278.32px;font-size:12.5px;letter-spacing:0.000px;color:#3a4052;transform:scaleX(0.9973);transform-origin:0 0;">Betreff</div>
<div class="t" style="left:222.20px;top:278.32px;font-size:12.5px;letter-spacing:0.000px;color:#141824;transform:scaleX(1.0085);transform-origin:0 0;">Kundenkommentar</div>
<div class="t" style="left:78.20px;top:310.22px;font-size:12.5px;letter-spacing:0.000px;color:#3a4052;transform:scaleX(1.0345);transform-origin:0 0;">Art</div>
<svg style="left:218px;top:307px" width="14" height="15" viewBox="0 0 14 15"><rect x="0" y="1.5" width="13.5" height="11.5" fill="#b9d7f7"/><rect x="0" y="1" width="13.5" height="3" fill="#5f7080"/><circle cx="1.7" cy="2.5" r="0.6" fill="#9ccc65"/><circle cx="3.4" cy="2.5" r="0.6" fill="#ffd54f"/><rect x="5" y="2" width="7.5" height="1" fill="#fff"/><path d="M4.5 14 Q7 12.5 7.3 8.5" fill="none" stroke="#4b55c8" stroke-width="1.3"/><path d="M5.5 8.8 L7.5 6.3 L9.2 9 Z" fill="#4b55c8"/></svg>
<div class="t" style="left:239.20px;top:310.22px;font-size:12.5px;letter-spacing:0.000px;color:#141824;transform:scaleX(1.0227);transform-origin:0 0;">Portal Aktivität</div>
<div class="t" style="left:78.20px;top:359.32px;font-size:12.5px;letter-spacing:0.000px;color:#3a4052;transform:scaleX(0.9871);transform-origin:0 0;">Beginn</div>
<div class="t" style="left:222.20px;top:359.32px;font-size:12.5px;letter-spacing:0.000px;color:#141824;transform:scaleX(0.9787);transform-origin:0 0;">05.11.2025 um 10:30</div>
<div class="t" style="left:78.20px;top:390.32px;font-size:12.5px;letter-spacing:0.000px;color:#3a4052;transform:scaleX(0.9178);transform-origin:0 0;">Ende</div>
<div class="t" style="left:222.20px;top:390.32px;font-size:12.5px;letter-spacing:0.000px;color:#141824;transform:scaleX(0.9787);transform-origin:0 0;">05.11.2025 um 10:30</div>
<div class="t" style="left:80.50px;top:448.95px;font-size:14px;letter-spacing:0.000px;color:#141824;transform:scaleX(1.0129);transform-origin:0 0;">Beschreibung</div>
<svg style="left:816px;top:451px" width="14" height="9" viewBox="0 0 14 9"><path d="M1 7.5 L7 1.8 L13 7.5" fill="none" stroke="#9fa8da" stroke-width="1.8"/></svg>
<div class="t" style="left:80.00px;top:498.66px;font-size:16px;letter-spacing:0.000px;color:#141824;transform:scaleX(1.0320);transform-origin:0 0;">Nur Werktags zwischen 09:00 und 17:00 Uhr telefonisch erreichbar</div>
<div class="r" style="left:877px;top:219px;width:491px;height:129px;background:#fdfdfd;box-shadow:0 1px 1.5px rgba(0,0,0,0.22)"></div>
<div class="t" style="left:907.50px;top:239.93px;font-size:14.5px;letter-spacing:0.000px;color:#141824;transform:scaleX(0.9771);transform-origin:0 0;">Eigenschaften</div>
<svg style="left:1325px;top:242px" width="14" height="9" viewBox="0 0 14 9"><path d="M1 7.5 L7 1.8 L13 7.5" fill="none" stroke="#9fa8da" stroke-width="1.8"/></svg>
<div class="t" style="left:907.50px;top:281.42px;font-size:12.5px;letter-spacing:0.000px;color:#3a4052;transform:scaleX(1.0244);transform-origin:0 0;">Priorität</div>
<svg style="left:1047px;top:278px" width="12" height="15" viewBox="0 0 12 15"><path d="M1 0.5 V14.5" stroke="#7d8a92" stroke-width="1.3"/><path d="M1.3 0.8 L11.3 5.5 L1.3 10 Z" fill="#43a047"/></svg>
<div class="t" style="left:1068.50px;top:281.42px;font-size:12.5px;letter-spacing:0.000px;color:#141824;transform:scaleX(0.9854);transform-origin:0 0;">In den nächsten 3 Tagen</div>
<div class="t" style="left:907.50px;top:312.72px;font-size:12.5px;letter-spacing:0.000px;color:#3a4052;transform:scaleX(0.9563);transform-origin:0 0;">Status</div>
<svg style="left:1046px;top:310px" width="15" height="15" viewBox="0 0 15 15"><circle cx="7.3" cy="7.3" r="6.4" fill="#fff" stroke="#a8d2f7" stroke-width="1.5"/></svg>
<div class="t" style="left:1068.50px;top:312.72px;font-size:12.5px;letter-spacing:0.000px;color:#141824;transform:scaleX(1.0394);transform-origin:0 0;">Nicht begonnen / offen</div>
<div class="r" style="left:877px;top:367px;width:491px;height:128px;background:#fdfdfd;box-shadow:0 1px 1.5px rgba(0,0,0,0.22)"></div>
<div class="t" style="left:907.50px;top:386.73px;font-size:14.5px;letter-spacing:0.000px;color:#141824;transform:scaleX(0.9869);transform-origin:0 0;">Beteiligte Personen</div>
<svg style="left:1325px;top:389px" width="14" height="9" viewBox="0 0 14 9"><path d="M1 7.5 L7 1.8 L13 7.5" fill="none" stroke="#9fa8da" stroke-width="1.8"/></svg>
<div class="t" style="left:907.50px;top:429.22px;font-size:12.5px;letter-spacing:0.000px;color:#3a4052;transform:scaleX(1.0115);transform-origin:0 0;">Delegiert von</div>
<svg style="left:1048px;top:425.5px" width="18" height="16" viewBox="0 0 18 16"><path d="M2.6 2 Q2.6 10.5 10.5 13.3" fill="none" stroke="#43ad4b" stroke-width="3"/><rect x="0.8" y="0.6" width="4.2" height="3.6" rx="0.8" fill="#43ad4b"/><rect x="9.4" y="11.6" width="4.6" height="3.8" rx="0.8" fill="#43ad4b"/><rect x="5.6" y="0.7" width="10.8" height="7.9" rx="0.9" fill="#d9dee2" stroke="#7d8a92" stroke-width="1.3"/><path d="M6.3 1.8 L11 5 L15.7 1.8" fill="none" stroke="#7d8a92" stroke-width="0.9"/></svg>
<div class="t" style="left:1075.00px;top:429.22px;font-size:12.5px;letter-spacing:0.000px;color:#0b5fcf;transform:scaleX(0.9729);transform-origin:0 0;">Lisbet Grenzbach</div>
<div class="t" style="left:907.50px;top:460.42px;font-size:12.5px;letter-spacing:0.000px;color:#3a4052;transform:scaleX(1.0059);transform-origin:0 0;">Delegiert an</div>
<svg style="left:1048px;top:456.5px" width="18" height="16" viewBox="0 0 18 16"><path d="M2.6 2 Q2.6 10.5 10.5 13.3" fill="none" stroke="#43ad4b" stroke-width="3"/><rect x="0.8" y="0.6" width="4.2" height="3.6" rx="0.8" fill="#43ad4b"/><rect x="9.4" y="11.6" width="4.6" height="3.8" rx="0.8" fill="#43ad4b"/><rect x="5.6" y="0.7" width="10.8" height="7.9" rx="0.9" fill="#d9dee2" stroke="#7d8a92" stroke-width="1.3"/><path d="M6.3 1.8 L11 5 L15.7 1.8" fill="none" stroke="#7d8a92" stroke-width="0.9"/></svg>
<div class="t" style="left:1075.00px;top:460.42px;font-size:12.5px;letter-spacing:0.000px;color:#0b5fcf;transform:scaleX(0.9729);transform-origin:0 0;">Lisbet Grenzbach</div>
<div class="r" style="left:877px;top:514px;width:491px;height:97px;background:#fdfdfd;box-shadow:0 1px 1.5px rgba(0,0,0,0.22)"></div>
<div class="t" style="left:907.30px;top:534.23px;font-size:14.5px;letter-spacing:0.000px;color:#141824;transform:scaleX(0.9893);transform-origin:0 0;">Kampagne</div>
<svg style="left:1325px;top:537px" width="14" height="9" viewBox="0 0 14 9"><path d="M1 7.5 L7 1.8 L13 7.5" fill="none" stroke="#9fa8da" stroke-width="1.8"/></svg>
<div class="t" style="left:907.30px;top:575.82px;font-size:12.5px;letter-spacing:0.000px;color:#3a4052;transform:scaleX(0.9774);transform-origin:0 0;">Rückläufer</div>
<div class="r" style="left:1058px;top:575px;width:22.5px;height:11px;border-radius:6px;background:#bfbfbf"></div>
<svg style="left:1047px;top:572px" width="17" height="17" viewBox="0 0 17 17"><defs><filter id="ks" x="-30%" y="-30%" width="160%" height="160%"><feGaussianBlur stdDeviation="0.6"/></filter></defs><circle cx="8.3" cy="8.6" r="7.6" fill="#9e9e9e" filter="url(#ks)" opacity="0.8"/><circle cx="8.3" cy="8.1" r="7.2" fill="#fdfdfd"/><path d="M4.8 4.6 L11.8 11.6 M11.8 4.6 L4.8 11.6" stroke="#444" stroke-width="1.1"/></svg>
<svg style="left:1374px;top:505px" width="8" height="10" viewBox="0 0 8 10"><path d="M1.2 1 L5.8 5 L1.2 9" fill="none" stroke="#222" stroke-width="1.9"/></svg>
<div class="r" style="left:1386px;top:219px;width:218px;height:580px;background:#fdfdfd;box-shadow:0 1px 1.5px rgba(0,0,0,0.22)"></div>
<div class="t" style="left:1404.40px;top:239.93px;font-size:14.5px;letter-spacing:0.000px;color:#141824;transform:scaleX(1.0292);transform-origin:0 0;">Aktionen</div>
<svg style="left:1403px;top:293px" width="14" height="9" viewBox="0 0 14 9"><path d="M1 1.2 L7 7.2 L13 1.2" fill="none" stroke="#2e4797" stroke-width="2"/></svg>
<svg style="left:1422px;top:290px" width="17" height="13" viewBox="0 0 17 13"><path d="M0 1.5 Q0 0.5 1 0.5 H6 L7.5 2.2 H16 Q17 2.2 17 3.2 V13 H0 Z" fill="#ffd966"/><rect x="0" y="4" width="17" height="9" fill="#ffe082"/></svg>
<div class="t" style="left:1443.60px;top:293.22px;font-size:12.5px;letter-spacing:0.000px;color:#141824;">Vorgangsmanagement</div>
<svg style="left:1432px;top:328px" width="15" height="15" viewBox="0 0 15 15"><circle cx="7.5" cy="7.5" r="7.3" fill="#2196f3"/><path d="M5.5 4 L11 7.5 L5.5 11 Z" fill="#fff"/></svg>
<div class="t" style="left:1452.70px;top:331.32px;font-size:12.5px;letter-spacing:0.000px;color:#141824;transform:scaleX(0.9957);transform-origin:0 0;">Ticket anlegen</div>
<svg style="left:1432px;top:362px" width="15" height="15" viewBox="0 0 15 15"><circle cx="7.5" cy="7.5" r="7.3" fill="#2196f3"/><path d="M5.5 4 L11 7.5 L5.5 11 Z" fill="#fff"/></svg>
<div class="t" style="left:1452.70px;top:365.02px;font-size:12.5px;letter-spacing:0.000px;color:#141824;transform:scaleX(1.0048);transform-origin:0 0;">Vorgang anlegen</div>
<svg style="left:1405px;top:401.5px" width="9" height="13" viewBox="0 0 9 13"><path d="M1.2 1 L7.2 6.5 L1.2 12" fill="none" stroke="#2e4797" stroke-width="2"/></svg>
<svg style="left:1422px;top:400px" width="17" height="13" viewBox="0 0 17 13"><path d="M0 1.5 Q0 0.5 1 0.5 H6 L7.5 2.2 H16 Q17 2.2 17 3.2 V13 H0 Z" fill="#ffd966"/><rect x="0" y="4" width="17" height="9" fill="#ffe082"/></svg>
<div class="t" style="left:1443.60px;top:403.02px;font-size:12.5px;letter-spacing:0.000px;color:#141824;transform:scaleX(1.0004);transform-origin:0 0;">Kampagnenmanagement</div>
<svg style="left:1403px;top:436px" width="14" height="9" viewBox="0 0 14 9"><path d="M1 1.2 L7 7.2 L13 1.2" fill="none" stroke="#2e4797" stroke-width="2"/></svg>
<svg style="left:1422px;top:433px" width="17" height="13" viewBox="0 0 17 13"><path d="M0 1.5 Q0 0.5 1 0.5 H6 L7.5 2.2 H16 Q17 2.2 17 3.2 V13 H0 Z" fill="#ffd966"/><rect x="0" y="4" width="17" height="9" fill="#ffe082"/></svg>
<div class="t" style="left:1443.60px;top:435.72px;font-size:12.5px;letter-spacing:0.000px;color:#141824;transform:scaleX(0.9587);transform-origin:0 0;">Einspeiseranlagen</div>
<svg style="left:1432px;top:471px" width="15" height="15" viewBox="0 0 15 15"><circle cx="7.5" cy="7.5" r="7.3" fill="#bbdefb"/><path d="M5.5 4 L11 7.5 L5.5 11 Z" fill="#fff"/></svg>
<div class="t" style="left:1452.70px;top:474.52px;font-size:12.5px;letter-spacing:0.000px;color:#a8a8a8;transform:scaleX(1.0147);transform-origin:0 0;">Projekt identifizieren</div>
<div class="r" style="left:41px;top:808px;width:1563px;height:11px;background:#fcfcfc;"></div>
<svg style="left:807px;top:810px" width="11" height="8" viewBox="0 0 11 8"><path d="M1 1.2 L5.5 6 L10 1.2" fill="none" stroke="#222" stroke-width="1.8"/></svg>
<svg style="left:828px;top:810px" width="11" height="8" viewBox="0 0 11 8"><path d="M1 6.5 L5.5 1.8 L10 6.5" fill="none" stroke="#222" stroke-width="1.8"/></svg>
<div class="r" style="left:41px;top:819px;width:1563px;height:36px;background:#fcfcfc;"></div>
<div class="r" style="left:41px;top:819px;width:1563px;height:1px;background:#efefef;"></div>
<div class="r" style="left:1572px;top:821px;width:1px;height:34px;background:#ededed;"></div>
<svg style="left:52px;top:830px" width="14" height="12" viewBox="0 0 14 12"><rect x="0.5" y="0.5" width="13" height="11" fill="#e3f2fd" stroke="#90a4ae" stroke-width="0.8"/><rect x="2" y="3" width="4.5" height="6" fill="#1976d2"/><rect x="3" y="5.5" width="2.5" height="3" fill="#ff9800"/><path d="M8 4 H12 M8 6 H12 M8 8 H11" stroke="#546e7a" stroke-width="0.9"/></svg>
<div class="t" style="left:74.20px;top:830.52px;font-size:12.5px;letter-spacing:0.000px;color:#777;transform:scaleX(0.8935);transform-origin:0 0;">MITARBEITER (1)</div>
<svg style="left:176px;top:832px" width="9" height="9" viewBox="0 0 9 9"><path d="M1 1 L8 8 M8 1 L1 8" stroke="#2e4797" stroke-width="2.2"/></svg>
<svg style="left:204px;top:827px" width="17" height="16" viewBox="0 0 17 16"><path d="M2.5 0.8 V14.5 H16.5 V3 H4" fill="#fff" stroke="#78909c" stroke-width="1.1"/><path d="M0.8 1.8 Q2.5 -0.5 4 1.8 V14.5 Q2.5 12.5 0.8 14.5 Z" fill="#eceff1" stroke="#78909c" stroke-width="1"/><path d="M6 12 L9 8.5 L11.5 10 L15 6" fill="none" stroke="#2196f3" stroke-width="1.2"/></svg>
<div class="t" style="left:227.60px;top:830.52px;font-size:12.5px;letter-spacing:0.000px;color:#141824;transform:scaleX(0.8566);transform-origin:0 0;">PROJEKTE (1)</div>
<svg style="left:311px;top:832px" width="9" height="9" viewBox="0 0 9 9"><path d="M1 1 L8 8 M8 1 L1 8" stroke="#2e4797" stroke-width="2.2"/></svg>
<div class="r" style="left:198px;top:852px;width:132px;height:3px;background:#2e4797;"></div>
<svg style="left:346px;top:830px" width="4" height="12" viewBox="0 0 4 12"><circle cx="2" cy="1.5" r="1.3" fill="#2e4797"/><circle cx="2" cy="6" r="1.3" fill="#2e4797"/><circle cx="2" cy="10.5" r="1.3" fill="#2e4797"/></svg>
<div class="t" style="left:363.20px;top:830.52px;font-size:12.5px;letter-spacing:0.000px;color:#777;transform:scaleX(0.8471);transform-origin:0 0;">WEITERE BEREICHE</div>
</body></html>
